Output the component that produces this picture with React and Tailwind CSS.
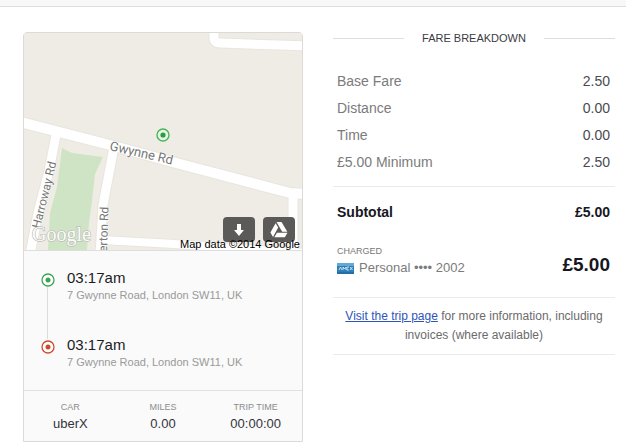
import React from "react";

const fares = [
  ["Base Fare", "2.50"],
  ["Distance", "0.00"],
  ["Time", "0.00"],
  ["£5.00 Minimum", "2.50"],
];

const facts = [
  ["CAR", "uberX"],
  ["MILES", "0.00"],
  ["TRIP TIME", "00:00:00"],
];

const roads = [
  { d: "M190 -3V5Q190 10 196 10L282 13", w: 9 },
  { d: "M32 102L25 138L14 180L6 222", w: 9 },
  { d: "M90 114L79 172L76 222", w: 9 },
  { d: "M78 207L150 211L282 220", w: 8 },
  { d: "M269 161V222", w: 9 },
  { d: "M-4 89L86 112L156 131L266 160L282 161", w: 10 },
];

function Marker({ className, color }) {
  return (
    <svg className={className} width="14" height="14" viewBox="0 0 14 14" fill="none" aria-hidden="true">
      <circle cx="7" cy="7" r="6" fill="#fff" stroke={color} strokeWidth="1.3" />
      <circle cx="7" cy="7" r="2.5" fill={color} />
    </svg>
  );
}

function TripMap() {
  return (
    <div className="relative h-[217px] overflow-hidden bg-[#efece5]">
      <svg className="block h-full w-full" viewBox="0 0 278 217" preserveAspectRatio="xMidYMid slice" role="img" aria-label="Map of the pickup location">
        <path d="M38 115L48 120L79 124L71 141L68 168L65 190L63 217H24L26 180L33 154Z" fill="#cfe4c5" />
        {roads.map((r) => (
          <path key={r.d} d={r.d} fill="none" stroke="#e9e5de" strokeWidth={r.w + 2} strokeLinejoin="round" />
        ))}
        {roads.map((r) => (
          <path key={r.d} d={r.d} fill="none" stroke="#fff" strokeWidth={r.w} strokeLinejoin="round" />
        ))}
        <g fill="#777" stroke="#fff" strokeWidth="1" paintOrder="stroke" fontFamily="Roboto, sans-serif">
          <text x="85" y="117" fontSize="13" transform="rotate(13 85 117)">Gwynne Rd</text>
          <text x="16" y="196" fontSize="12" transform="rotate(-76 16 196)">Harroway Rd</text>
          <text x="83" y="219" fontSize="12" transform="rotate(-88 83 219)">erton Rd</text>
        </g>
        <circle cx="139" cy="102" r="6" fill="#e6f7e4" stroke="#48b65a" strokeWidth="1.4" />
        <circle cx="139" cy="102" r="2.6" fill="#2e9a48" />
        <text x="8" y="208" fontSize="20" fill="#fbfbf9" stroke="#bfc0ba" strokeWidth="1.4" paintOrder="stroke" fontFamily="'Liberation Serif', serif">Google</text>
      </svg>
      <div className="absolute right-[7px] bottom-2 flex gap-2">
        <button aria-label="Download" className="flex h-[25px] w-8 items-center justify-center rounded-sm bg-[#5c5a58]">
          <svg width="12" height="12" viewBox="0 0 12 12" fill="#fff"><path d="M4 0H8V6H11L6 12L1 6H4Z" /></svg>
        </button>
        <button aria-label="Save to Drive" className="flex h-[25px] w-8 items-center justify-center rounded-sm bg-[#5c5a58]">
          <svg width="18" height="16" viewBox="0 0 18 16" fill="#fff">
            <path d="M6.5 0H11.5L17.3 9.7H12.2Z" />
            <path d="M5.6 1.2L8.2 5.6L3 14.9L.4 10.4Z" />
            <path d="M7 10.8H17.5L14.8 15.3H4.3Z" />
          </svg>
        </button>
      </div>
      <p className="absolute right-[2px] bottom-0 text-[11px] leading-[12px] text-black">Map data ©2014 Google</p>
    </div>
  );
}

function Stop({ color, line }) {
  return (
    <li className="relative flex gap-3">
      {line && <span className="absolute top-[18px] left-[6px] h-[52px] w-px bg-[#dcdcdc]" />}
      <Marker className="mt-1 shrink-0" color={color} />
      <div>
        <p className="text-[15px] leading-[18px] text-[#1c1c24]">03:17am</p>
        <p className="text-[11px] leading-4 text-[#999]">7 Gwynne Road, London SW11, UK</p>
      </div>
    </li>
  );
}

export default function App() {
  return (
    <div className="bg-white font-['Liberation_Sans',Arial,sans-serif]">
      <header className="h-[7px] border-b border-[#dedede] bg-[#f8f8f8]" />
      <main className="grid grid-cols-[280fr_282fr] items-start gap-[30px] pt-[25px] pr-[11px] pl-[23px]">
        <section className="rounded-t-sm border border-[#dcdad7] bg-[#fafafa]">
          <TripMap />
          <ul className="flex flex-col gap-[33px] border-t border-[#dedede] px-[17px] pt-[18px] pb-5">
            <Stop color="#3fa355" line />
            <Stop color="#cf4a2c" />
          </ul>
          <dl className="grid grid-cols-3 border-t border-[#e2e2e2] pt-[10px] pb-[9px] text-center">
            {facts.map(([label, value]) => (
              <div key={label}>
                <dt className="text-[9px] leading-3 text-[#8c8c8c]">{label}</dt>
                <dd className="mt-[3px] text-[13px] leading-4 text-[#33333b]">{value}</dd>
              </div>
            ))}
          </dl>
        </section>

        <section>
          <h2 className="flex items-center gap-[18px] text-[11px] leading-3 text-[#3b3b42]">
            <span className="h-px flex-1 bg-[#dedede]" />
            FARE BREAKDOWN
            <span className="h-px flex-1 bg-[#dedede]" />
          </h2>
          <table className="mt-6 w-full text-[14px] leading-[27px]">
            <tbody>
              {fares.map(([label, value]) => (
                <tr key={label}>
                  <th scope="row" className="p-0 pl-1 text-left font-normal text-[#7b7b7b]">{label}</th>
                  <td className="p-0 pr-[5px] text-right text-[#4a4a50]">{value}</td>
                </tr>
              ))}
            </tbody>
          </table>
          <div className="mt-[10px] border-t border-[#ebebeb] pr-[5px] pl-1">
            <div className="flex justify-between pt-4 text-[14px] leading-[18px] font-bold text-[#17171f]">
              <span>Subtotal</span>
              <span>£5.00</span>
            </div>
            <div className="flex items-end justify-between pt-6 pb-5">
              <div>
                <p className="text-[9px] leading-3 text-[#777]">CHARGED</p>
                <p className="mt-[2px] flex items-center gap-[5px] text-[13px] leading-[18px] text-[#7b7b7b]">
                  <svg width="17" height="11" viewBox="0 0 17 11" aria-hidden="true">
                    <rect width="17" height="11" fill="#2e7fb7" />
                    <path d="M0 0H17V3H0Z" fill="#64a9d4" />
                    <path d="M2 7L3.5 4L5 7M6 7V4L7.5 6L9 4V7M12 4H10V7H12M13 4L15.5 7M15.5 4L13 7" fill="none" stroke="#d7ebf6" strokeWidth=".9" />
                    <path d="M0 9H17V11H0Z" fill="#2270a8" />
                  </svg>
                  Personal •••• 2002
                </p>
              </div>
              <strong className="text-[19px] leading-6 text-[#17171f]">£5.00</strong>
            </div>
          </div>
          <p className="border-y border-[#ebebeb] py-[9px] text-center text-[12px] leading-[19px] text-[#6b6b6b]">
            <a href="#trip" className="text-[#2e55b8] underline">Visit the trip page</a> for more information, including invoices (where available)
          </p>
        </section>
      </main>
    </div>
  );
}
